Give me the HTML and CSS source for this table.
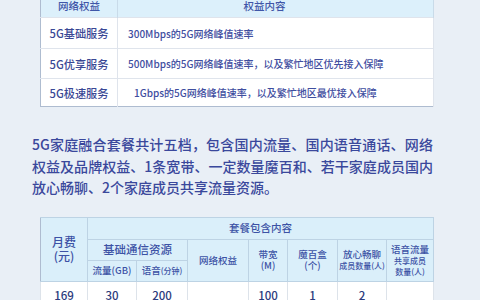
FILE: index.html
```html
<!DOCTYPE html>
<html lang="zh-CN">
<head>
<meta charset="utf-8">
<link rel="stylesheet" href="styles.css">
</head>
<body>
<div class="page">
  <table class="rights">
    <colgroup><col class="c-label"><col class="c-content"></colgroup>
    <thead>
      <tr class="r-head"><th>网络权益</th><th class="th-content">权益内容</th></tr>
    </thead>
    <tbody>
      <tr class="r1"><td class="label">5G基础服务</td><td class="content">300Mbps的5G网络峰值速率</td></tr>
      <tr class="r2"><td class="label">5G优享服务</td><td class="content">500Mbps的5G网络峰值速率，以及繁忙地区优先接入保障</td></tr>
      <tr class="r3"><td class="label">5G极速服务</td><td class="content indent">1Gbps的5G网络峰值速率，以及繁忙地区最优接入保障</td></tr>
    </tbody>
  </table>

  <p class="intro">5G家庭融合套餐共计五档，包含国内流量、国内语音通话、网络权益及品牌权益、1条宽带、一定数量魔百和、若干家庭成员国内放心畅聊、2个家庭成员共享流量资源。</p>

  <table class="plans">
    <colgroup>
      <col class="w47"><col class="w49"><col class="w51"><col class="w61"><col class="w39"><col class="w50"><col class="w49"><col class="w47">
    </colgroup>
    <thead>
      <tr class="h1">
        <th rowspan="3" class="fee">月费<br>(元)</th>
        <th colspan="7" class="big">套餐包含内容</th>
      </tr>
      <tr class="h2">
        <th colspan="2" class="basic">基础通信资源</th>
        <th rowspan="2" class="mid">网络权益</th>
        <th rowspan="2" class="mid">带宽<br>(M)</th>
        <th rowspan="2" class="mid">魔百盒<br>(个)</th>
        <th rowspan="2" class="mid">放心畅聊<br><span class="sm">成员数量(人)</span></th>
        <th rowspan="2" class="mid">语音流量<br><span class="sm">共享成员<br>数量(人)</span></th>
      </tr>
      <tr class="h3">
        <th class="sub">流量(GB)</th>
        <th class="sub">语音<span class="sm">(分钟)</span></th>
      </tr>
    </thead>
    <tbody>
      <tr class="data">
        <td>169</td><td>30</td><td>200</td><td></td><td>100</td><td>1</td><td>2</td><td></td>
      </tr>
    </tbody>
  </table>
</div>
</body>
</html>
```

FILE: styles.css
```css
html, body {
  margin: 0;
  padding: 0;
}
body {
  background: #e9eff6;
  font-family: "Noto Sans CJK SC", "Noto Sans", sans-serif;
  color: #3c4c9e;
  overflow: hidden;
}
.page {
  width: 401px;
  margin-left: 32px;
  margin-top: -8px;
  display: flex;
  flex-direction: column;
}
table {
  border-collapse: collapse;
  margin-left: 8px;
  width: 393px;
  table-layout: fixed;
  background: #fff;
  border: 1px solid #aebcd0;
}
/* top table */
.c-label { width: 77px; }
.c-content { width: 316px; }
.rights th {
  background: #dcf0fb;
  font-weight: 500;
  font-size: 10.5px;
  color: #3f56a8;
  height: 24px;
  padding: 0;
  border-right: 1px solid #c9dbe9;
}
.rights th.th-content { padding-right: 22px; }
.rights td {
  padding: 0;
  border-top: 1px solid #dfe4ec;
  border-right: 1px solid #dfe4ec;
}
.rights .r1 td { height: 30px; }
.rights .r2 td { height: 29px; }
.rights .r3 td { height: 27px; }
.label {
  text-align: center;
  font-size: 11.2px;
  font-weight: 500;
  color: #3a4895;
}
.content {
  font-size: 10px;
  font-weight: 500;
  color: #3f4e9f;
  padding-left: 10px !important;
  white-space: nowrap;
}
.content.indent { padding-left: 16px !important; }

/* paragraph */
.intro {
  margin: 27px 0 18px 0;
  font-size: 14px;
  font-weight: 500;
  line-height: 21.5px;
  text-align: justify;
  color: #3a489c;
}

/* bottom table */
.w47 { width: 47px; }
.w49 { width: 49px; }
.w51 { width: 51px; }
.w61 { width: 61px; }
.w39 { width: 39px; }
.w50 { width: 50px; }
.plans th {
  background: #daeffa;
  font-weight: 500;
  color: #3c52a5;
  padding: 0;
  border: 1px solid #bdd3e4;
  line-height: 1.2;
  text-align: center;
}
.plans .h1 th { height: 21px; }
.plans .h2 th { height: 20px; }
.plans .h3 th { height: 20px; }
.plans .fee {
  font-size: 12px;
  line-height: 14px;
  border-left: none;
}
.plans .big { font-size: 10.5px; }
.plans .basic { font-size: 11.5px; }
.plans .mid { font-size: 9.5px; line-height: 11px; }
.plans .sub { font-size: 9.5px; }
.plans .sm { font-size: 8px; line-height: 10px; }
.plans td {
  height: 26px;
  padding: 0;
  text-align: center;
  font-size: 11.5px;
  font-weight: 500;
  color: #2c3b7d;
  border: 1px solid #dde3ea;
}
```
